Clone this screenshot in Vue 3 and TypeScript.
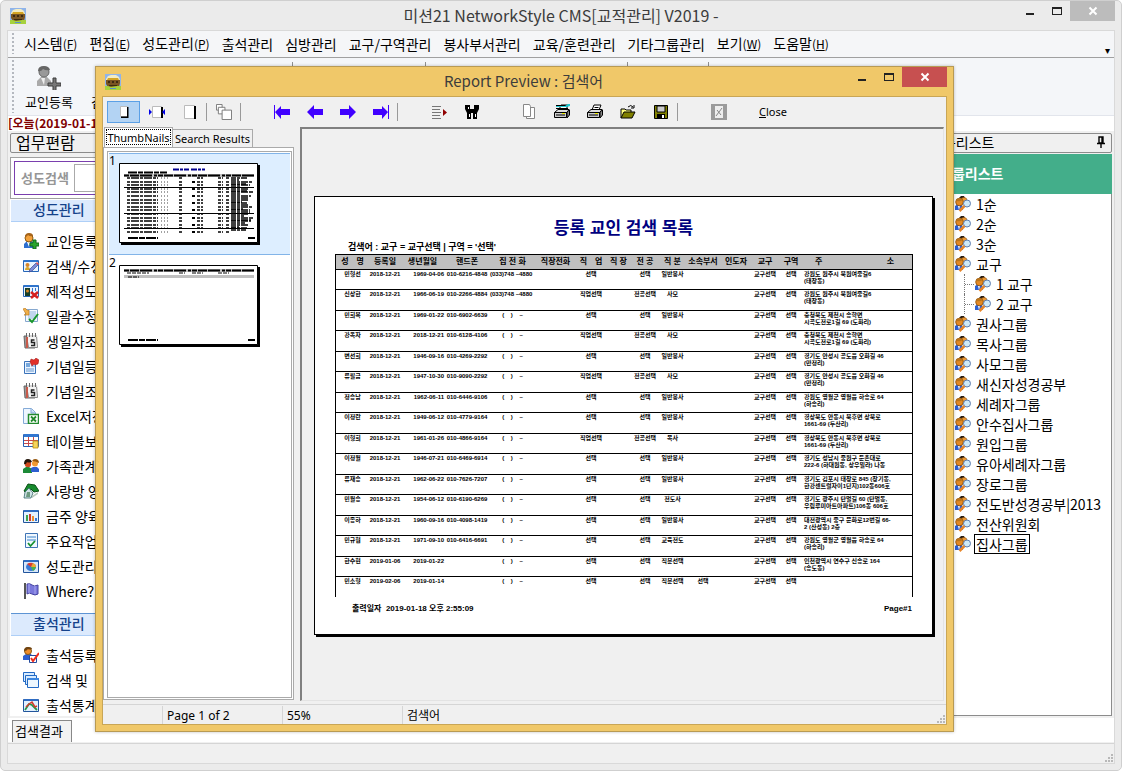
<script setup lang="ts">
import { ref } from 'vue'

interface MenuEntry { label: string; key?: string }
interface Entry { icon: string; label: string }
interface GroupNode { label: string; child?: boolean; selected?: boolean }
interface Member {
  name: string; reg: string; birth: string; phone: string; home: string
  job: string; major: string; duty: string; dept: string; area: string; zone: string; address: string
}

const menu: MenuEntry[] = [
  { label: '시스템', key: 'F' }, { label: '편집', key: 'E' }, { label: '성도관리', key: 'P' },
  { label: '출석관리' }, { label: '심방관리' }, { label: '교구/구역관리' }, { label: '봉사부서관리' },
  { label: '교육/훈련관리' }, { label: '기타그룹관리' }, { label: '보기', key: 'W' }, { label: '도움말', key: 'H' },
]

const memberTasks: Entry[] = [
  { icon: 'user-add', label: '교인등록' }, { icon: 'card-edit', label: '검색/수정' },
  { icon: 'card-del', label: '제적성도' }, { icon: 'batch', label: '일괄수정' },
  { icon: 'calendar', label: '생일자조' }, { icon: 'note', label: '기념일등' },
  { icon: 'calendar', label: '기념일조' }, { icon: 'excel', label: 'Excel저장' },
  { icon: 'table', label: '테이블보' }, { icon: 'family', label: '가족관계' },
  { icon: 'house', label: '사랑방 양' }, { icon: 'bars', label: '금주 양육' },
  { icon: 'todo', label: '주요작업' }, { icon: 'pie', label: '성도관리' },
  { icon: 'flag', label: 'Where?' },
]
const attendTasks: Entry[] = [
  { icon: 'user-check', label: '출석등록' }, { icon: 'windows', label: '검색 및' }, { icon: 'graph', label: '출석통계' },
]

const groups: GroupNode[] = [
  { label: '1순' }, { label: '2순' }, { label: '3순' }, { label: '교구' },
  { label: '1 교구', child: true }, { label: '2 교구', child: true },
  { label: '권사그룹' }, { label: '목사그룹' }, { label: '사모그룹' }, { label: '새신자성경공부' },
  { label: '세례자그룹' }, { label: '안수집사그룹' }, { label: '원입그룹' }, { label: '유아세례자그룹' },
  { label: '장로그룹' }, { label: '전도반성경공부|2013' }, { label: '전산위원회' }, { label: '집사그룹', selected: true },
]

const columns = ['성　명', '등록일', '생년월일', '핸드폰', '집 전 화', '직장전화', '직　업', '직 장', '전 공', '직 분', '소속부서', '인도자', '교구', '구역']

const none = '(    )    –'
function member(name: string, birth: string, phone: string, duty: string, address: string, extra: Partial<Member> = {}): Member {
  return { name, birth, phone, duty, address, reg: '2018-12-21', home: none, job: '선택', major: '선택', dept: '', area: '교구선택', zone: '선택', ...extra }
}
const wide = { job: '직업선택', major: '전공선택' }
const tel = '(033)748 –4880'
const members: Member[] = [
  member('민형선', '1969-04-06', '010-6216-4848', '일반봉사', '강원도 원주시 북원여중길6\n(태장동)', { home: tel }),
  member('신상한', '1966-06-19', '010-2266-4884', '사모', '강원도 원주시 북원여중길6\n(태장동)', { ...wide, home: tel }),
  member('민희복', '1969-01-22', '010-6902-6639', '일반봉사', '충청북도 제천시 송학면\n시곡도전로1길 69 (도화리)'),
  member('강옥자', '2018-12-21', '010-6128-4106', '사모', '충청북도 제천시 송학면\n시곡도전로1길 69 (도화리)', wide),
  member('변선희', '1946-09-16', '010-4269-2292', '일반봉사', '경기도 안성시 공도읍 오화길 46\n(만정리)'),
  member('류필금', '1947-10-30', '010-9090-2292', '사모', '경기도 안성시 공도읍 오화길 46\n(만정리)', wide),
  member('정승남', '1962-06-11', '010-6446-9106', '일반봉사', '강원도 영월군 영월읍 하송로 64\n(하송리)'),
  member('이정란', '1949-06-12', '010-4779-9164', '일반봉사', '경상북도 안동시 북후면 상북로\n1661-69 (두산리)'),
  member('이형희', '1961-01-26', '010-4866-9164', '목사', '경상북도 안동시 북후면 상북로\n1661-69 (두산리)', wide),
  member('이정월', '1946-07-21', '010-6469-6914', '일반봉사', '경기도 성남시 중원구 둔촌대로\n222-6 (하대원동, 상우빌라) 나동'),
  member('류재승', '1962-06-22', '010-7626-7207', '일반봉사', '경기도 김포시 태장로 845 (장기동,\n한강센트럴자이1단지)102동606호'),
  member('민월승', '1954-06-12', '010-6190-6269', '전도사', '경기도 광주시 탄벌길 60 (탄벌동,\n우림루미아트아파트)106동 606호'),
  member('이종하', '1960-09-16', '010-4098-1419', '일반봉사', '대전광역시 중구 문화로12번길 66-\n2 (산성동) 2층'),
  member('민규협', '1971-09-10', '010-6416-6691', '교육전도', '강원도 영월군 영월읍 하송로 64\n(하송리)'),
  member('한수현', '2019-01-22', '', '직분선택', '인천광역시 연수구 신송로 164\n(송도동)', { reg: '2019-01-06' }),
  member('민소형', '2019-01-14', '', '직분선택', '', { reg: '2019-02-06', dept: '선택' }),
]

const tools = ['fit', 'fit-width', 'full', '|', 'tile', '|', '', 'first', 'prev', 'next', 'last', '|', '', 'outline', 'find', '', 'copy', 'print-setup', 'print', 'open', 'save', '|', '', 'stop']
const toolNames: Record<string, string> = {
  fit: 'Whole page', 'fit-width': 'Page width', full: 'Full size', tile: 'Tile pages', first: 'First page', prev: 'Previous page',
  next: 'Next page', last: 'Last page', outline: 'Outline', find: 'Find', copy: 'Copy', 'print-setup': 'Print setup',
  print: 'Print', open: 'Open', save: 'Save', stop: 'Stop',
}
const thumbRows = Array.from({ length: 16 }, (_, i) => 15 + Math.round(i * 3.6))
const keyword = ref('')
</script>

<template>
  <svg class="defs" aria-hidden="true">
    <defs>
      <symbol id="ark" viewBox="0 0 16 16">
        <rect width="16" height="16" fill="#8fb4ea" /><path d="M1 5 3 2l3-1h5l3 2 1 3v2H1z" fill="#f3ecc4" /><path d="M3 4h10l1 2H2z" fill="#d5a524" />
        <path d="M1 6h14v3l-1 4H3L1 10z" fill="#7a5522" /><path d="M3 7h2v2H3zm4 0h2v2H7zm4 0h2v2h-2zM4 11h8v1H4z" fill="#3d2b10" />
        <path d="M0 12h3l3 1 6-1h4v4H0z" fill="#a6d13d" /><path d="M5 14h6v1H5z" fill="#5b92c9" />
      </symbol>
      <symbol id="user-add" viewBox="0 0 16 16">
        <path d="M1 15V11l3-3h5l2 3v4z" fill="#2d6fd0" /><path d="M4 9h3l-1 5z" fill="#fff" /><circle cx="6" cy="5" r="4" fill="#f3a13a" stroke="#8b5a13" />
        <path d="M2 4q0-4 4-4 4 0 4 3-3 1-5-1-1 2-3 2z" fill="#a5641a" /><path d="M10 7h3v3h3v3h-3v3h-3v-3H7v-3h3z" fill="#28a42b" stroke="#12691a" />
      </symbol>
      <symbol id="user-gray" viewBox="0 0 24 24">
        <path d="M0 20v-5l4-4h6l4 4v5z" fill="#aaa" /><path d="M4 12h4l-1 7z" fill="#eee" /><circle cx="7" cy="6" r="5" fill="#999" stroke="#666" />
        <path d="M1 5q0-5 6-5 5 0 6 4-4 1-7-1-2 3-5 2z" fill="#666" /><path d="M16 12h3v5h5v3h-5v5h-3v-5h-5v-3h5z" fill="#777" stroke="#3c3c3c" />
      </symbol>
      <symbol id="user-check" viewBox="0 0 16 16">
        <path d="M0 13V9l3-2h5l2 3v3z" fill="#2d5fd0" /><circle cx="5" cy="4" r="3.500" fill="#f08e2b" stroke="#8b5a13" />
        <path d="M1 4q0-4 4-4 4 0 4 2-3 1-4 0-1 2-4 2z" fill="#6e4312" /><path d="M6.500 8.500h7v7h-7z" fill="#fff" stroke="#244a9c" /><path d="m8 11 2 3 6-8" fill="none" stroke="#ee2b1c" stroke-width="2" />
      </symbol>
      <symbol id="card-edit" viewBox="0 0 16 16">
        <path d="M.5 2.500h15v11H.5z" fill="#eaf4ff" stroke="#2666b8" /><path d="M1 2h14v2H1z" fill="#2f74cc" /><circle cx="4.500" cy="7" r="2" fill="#d6862a" /><path d="M2 12q0-3 2.500-3T7 12z" fill="#d8a72c" />
        <path d="m6 14 1-3 6-6 2 2-6 6z" fill="#7a8bd8" stroke="#3d478c" stroke-width=".7" /><path d="m13 5 1-1 2 2-1 1z" fill="#e55" />
      </symbol>
      <symbol id="card-del" viewBox="0 0 16 16">
        <path d="M.5 2.500h15v11H.5z" fill="#eaf4ff" stroke="#2666b8" /><path d="M1 2h14v2H1z" fill="#2f74cc" /><path d="M2 5h5v8H2z" fill="#173f2a" /><circle cx="4.500" cy="8" r="1.500" fill="#d6862a" />
        <path d="M9 5h1v5H9zm3 0h1v3h-1z" fill="#2f74cc" /><path d="m8 9 7 6m0-6-7 6" stroke="#d61f1f" stroke-width="2.500" />
      </symbol>
      <symbol id="batch" viewBox="0 0 16 16">
        <path d="M2.500 1.500h12v12h-12z" fill="#f3f8ff" stroke="#86a8cf" /><path d="M5 4h8M5 6h8M5 8h8M5 10h8" stroke="#8eb3dd" /><path d="m0 1 2-1 3 3 1-1v5H1l2-1z" fill="#f0b04a" stroke="#b87415" stroke-width=".6" />
        <path d="m6 11 3 3 6-8" fill="none" stroke="#19962b" stroke-width="2" />
      </symbol>
      <symbol id="calendar" viewBox="0 0 16 16">
        <path d="M1 3h9l2 12H2z" fill="#9a9a9a" stroke="#666" /><path d="M3.500 2.500h10l1 12h-9z" fill="#f4f4f4" stroke="#888" /><path d="M3 2h2v13H3z" fill="#c85a4a" /><path d="M4 2h10v2H4z" fill="#d8d8d8" />
        <path d="M3.500 0v4m3-4v4m3-4v4m3-4v4" stroke="#666" /><path d="M11.500 7H8.500v2.500h3v3H8" fill="none" stroke="#222" stroke-width="1.500" />
      </symbol>
      <symbol id="note" viewBox="0 0 16 16">
        <path d="M1.500 3.500h11v12h-11z" fill="#ecf4ff" stroke="#3b73b9" /><path d="M3 5h4v4H3z" fill="#76a8dd" /><path d="M8 8h4M3 11h8M3 13h8" stroke="#6395cd" />
        <path d="M7 4 8 1l3 1 2-2 3 2-1 4-3 1-1-1-2 2z" fill="#e0302a" stroke="#981414" stroke-width=".5" />
      </symbol>
      <symbol id="excel" viewBox="0 0 16 16">
        <path d="M.5.500h8l4 4v11H.5z" fill="#edf5ff" stroke="#85abd7" /><path d="M8 1v4h4" fill="#c5dcf6" stroke="#85abd7" /><path d="M5.500 6.500h10v9h-10z" fill="#fff" stroke="#238a2d" stroke-width="1.500" />
        <path d="m8 8.500 5 5m0-5-5 5" stroke="#238a2d" stroke-width="1.800" />
      </symbol>
      <symbol id="table" viewBox="0 0 16 16">
        <path d="M.5 1.500h15v12H.5z" fill="#fff" stroke="#2761b5" /><path d="M1 1h14v3H1z" fill="#3277d0" /><path d="M1 7.500h14M1 10.500h14M5.500 4v9M10.500 4v9" stroke="#c74a4a" /><path d="M10 8h5v7h-5z" fill="#f6d45a" stroke="#b98e10" stroke-width=".8" />
      </symbol>
      <symbol id="family" viewBox="0 0 16 16">
        <path d="M0 15v-4l3-2h3l3 2v4z" fill="#1c8a37" /><path d="M8 14v-4l2-1h4l2 2v3z" fill="#2d5fd0" /><circle cx="5" cy="6" r="3.200" fill="#d34a1e" /><circle cx="12" cy="5.500" r="3" fill="#f09a32" />
        <path d="M1 6q0-5 4-5 3 0 4 3-4 1-5 0-1 3-3 2z" fill="#22150b" /><path d="M9 3q1-2 3-2 4 0 4 4-4-2-7-2z" fill="#98590f" />
      </symbol>
      <symbol id="house" viewBox="0 0 16 16">
        <path d="M1 8 5 1l7 1 4 6-5 1-3-3-3 5z" fill="#168a2c" stroke="#0b4f17" /><path d="m2 9 4-4 4 5-2 5H1z" fill="#cfe3e6" stroke="#366" stroke-width=".8" /><path d="M4 9h3v5H3z" fill="#6d9a80" /><path d="m9 13 6-4v2l-6 4z" fill="#b5c7bb" />
      </symbol>
      <symbol id="bars" viewBox="0 0 16 16">
        <path d="M.5 2.500h15v12H.5z" fill="#e2f1ff" stroke="#22559c" /><path d="M1 2h14v2H1z" fill="#2f6cc2" /><path d="M3 7h2v6H3z" fill="#3fa24a" /><path d="M6 6h2v7H6z" fill="#d23a2b" /><path d="M9 8h2v5H9z" fill="#ee8e2d" /><path d="M12 10h2v3h-2z" fill="#3277d0" />
      </symbol>
      <symbol id="graph" viewBox="0 0 16 16">
        <path d="M.5 2.500h15v12H.5z" fill="#e2f1ff" stroke="#22559c" /><path d="M1 2h14v2H1z" fill="#2f6cc2" /><path d="m2 13 4-6 3 1 5 5" fill="none" stroke="#25984a" stroke-width="1.800" /><path d="m3 10 3-3 3-2 3 5 2-1" fill="none" stroke="#d23a2b" stroke-width="1.500" />
      </symbol>
      <symbol id="todo" viewBox="0 0 16 16">
        <path d="M2.500.500h12v14h-12z" fill="#f0f8ff" stroke="#3f74b5" /><path d="M4 4h9M4 7h9" stroke="#3c83ca" /><path d="m5 10 2.500 3L12 8" fill="none" stroke="#169030" stroke-width="1.800" />
      </symbol>
      <symbol id="pie" viewBox="0 0 16 16">
        <path d="M.5 2.500h15v12H.5z" fill="#d7e7fa" stroke="#22559c" /><path d="M1 2h14v2H1z" fill="#2f6cc2" /><ellipse cx="8" cy="9" rx="5" ry="4" fill="#3a7ad5" /><path d="M8 9 4 6q3-2 6-1z" fill="#e03a2b" /><path d="m8 9 2-4q3 1 3 4z" fill="#f0a52c" /><path d="M8 9h5q-1 3-3 4z" fill="#4bb148" />
      </symbol>
      <symbol id="flag" viewBox="0 0 16 16">
        <path d="M1 0h2v16H1z" fill="#555" /><path d="M4 1q3-1 5 1t6 0v9q-3 2-6 0t-5 0z" fill="#7a78dc" stroke="#4442a0" /><path d="M6 1v9m6-7v8" stroke="#a9a8ef" />
      </symbol>
      <symbol id="windows" viewBox="0 0 16 16">
        <path d="M.5.500h11v9H.5z" fill="#d8ecff" stroke="#2269c4" /><path d="M2.500 3.500h11v9h-11z" fill="#d8ecff" stroke="#2269c4" /><path d="M4.500 6.500h11v9h-11z" fill="#edf7ff" stroke="#2269c4" /><path d="M5 6h11v2H5z" fill="#3b86e0" />
      </symbol>
      <symbol id="people" viewBox="0 0 16 16">
        <path d="M4 2 6 0h3l1 2v3H4z" fill="#2a1c10" /><circle cx="9" cy="4.500" r="3" fill="#ef9a35" stroke="#8a4f0b" stroke-width=".6" /><path d="M0 14V10l3-2h4l1 6z" fill="#2d5fd0" /><path d="M3 10h2l-1 4z" fill="#fff" />
        <circle cx="4.500" cy="6" r="3.800" fill="#e58a24" stroke="#8a4f0b" stroke-width=".8" /><path d="M1 5q1-3 4-3l3 2q-3 2-7 1z" fill="#b9741a" />
        <circle cx="12" cy="7.500" r="3.500" fill="#cfeaf8" stroke="#5f7fb0" /><path d="m9.500 10-5 5" stroke="#e8872a" stroke-width="2.500" />
      </symbol>
      <symbol id="fit" viewBox="0 0 16 16"><path d="M4.500 2.500h7v10h-7z" fill="#fff" stroke="#bbb" /><path d="M11 3h1.500v11H5v-1.500h6z" fill="#000" /></symbol>
      <symbol id="fit-width" viewBox="0 0 16 16"><path d="M3.500 2.500h9v11h-9z" fill="#fff" stroke="#bbb" /><path d="M12 3h2v11h-2z" fill="#000" /><path d="M0 5v6l3-3zM16 5v6l-3-3z" fill="#0000e8" /></symbol>
      <symbol id="full" viewBox="0 0 16 16"><path d="M2.500 1.500h10v13h-10z" fill="#fff" stroke="#bbb" /><path d="M12 2h2v13h-2z" fill="#000" /></symbol>
      <symbol id="tile" viewBox="0 0 17 17"><g fill="#fff" stroke="#777"><path d="M.5.500h6v6h-6z" /><path d="M2.500 3.500h7v7h-7z" /><path d="M6.500 6.500h10v10h-10z" /></g></symbol>
      <symbol id="prev" viewBox="0 0 16 16"><path d="m0 8 7-7v4h9v6H7v4z" fill="#4000ff" /></symbol>
      <symbol id="next" viewBox="0 0 16 16"><path d="m16 8-7-7v4H0v6h9v4z" fill="#4000ff" /></symbol>
      <symbol id="first" viewBox="0 0 16 16"><path d="M0 1h1v14H0zM1 8l6-6v3h9v6H7v4z" fill="#4000ff" /></symbol>
      <symbol id="last" viewBox="0 0 16 16"><path d="M15 1h1v14h-1zM15 8 9 2v3H0v6h9v4z" fill="#4000ff" /></symbol>
      <symbol id="outline" viewBox="0 0 16 16"><path d="M1 2.500h9M1 5.500h8M1 8.500h9M1 11.500h8M1 14.500h9" stroke="#777" /><path d="m12 5 4 3.500-4 3.500z" fill="#900000" /></symbol>
      <symbol id="find" viewBox="0 0 16 16"><path d="M1 1h5v4h4V1h5v4l-2 4v6H9V9H7v6H3V9L1 5z" fill="#000" /><path d="M5 10h1v3H5zm6 0h1v3h-1zM4 3h1v2H4z" fill="#fff" /></symbol>
      <symbol id="copy" viewBox="0 0 16 16"><g fill="#fff" stroke="#888"><path d="M5.500 3.500h8v11h-8z" /><path d="M2.500.500h6l1 2v10h-7z" /></g></symbol>
      <symbol id="print" viewBox="0 0 16 16"><path d="m5 6 2-5h7l-2 5z" fill="#fff" stroke="#000" /><path d="M7.500 3.500h4" stroke="#000" /><path d="M.5 8.500 4 5.500h11l-2 3z" fill="#ddd" stroke="#000" /><path d="M.5 8.500h12v5H.5z" fill="#ccc" stroke="#000" /><path d="m13 8 2.500-2v5L13 14z" fill="#888" stroke="#000" /><path d="M2 11h9" stroke="#000" /><path d="M8 9h3v1H8z" fill="#ee0" /></symbol>
      <symbol id="print-setup" viewBox="0 0 16 16"><path d="m5 6 2-5h7l-2 5z" fill="#fff" stroke="#000" /><path d="M.5 8.500 4 5.500h11l-2 3z" fill="#ddd" stroke="#000" /><path d="M.5 8.500h12v5H.5z" fill="#ccc" stroke="#000" /><path d="m13 8 2.500-2v5L13 14z" fill="#888" stroke="#000" /><path d="M2 11h9M2 1.500h12M2 4.500h12" stroke="#000" /><path d="M2 2h9l3-2h2v2l-3 1H2z" fill="#20c8d0" /><path d="M8 9h3v1H8z" fill="#ee0" /></symbol>
      <symbol id="open" viewBox="0 0 16 16"><path d="M1 14V5h4l1 1h5v3" fill="#ffff80" stroke="#000" /><path d="m1 14 3-6h11l-3 6z" fill="#808000" stroke="#000" /><path d="M8 3q3-3 5 0m1-2v3h-3" fill="none" stroke="#000" /></symbol>
      <symbol id="save" viewBox="0 0 16 16"><path d="M1.500 1.500h13v13h-13z" fill="#808000" stroke="#000" /><path d="M4 2h8v6H4z" fill="#ccc" stroke="#000" /><path d="M4 10h8v5H4z" fill="#000" /><path d="M9 11h2v3H9z" fill="#fff" /></symbol>
      <symbol id="stop" viewBox="0 0 16 16"><path d="M0 0h16v16H0z" fill="#9b9b9b" /><path d="M4 2h8v12H4z" fill="#eee" /><path d="m5 12 6-8M6 6l4 5" stroke="#888" /></symbol>
      <symbol id="cross" viewBox="0 0 10 10"><path d="m1.500 1.500 7 7m0-7-7 7" stroke="#fff" stroke-width="2" /></symbol>
      <symbol id="grip" viewBox="0 0 10 10"><path d="M7 1h2v2H7zM4 4h2v2H4zm3 0h2v2H7zM1 7h2v2H1zm3 0h2v2H4zm3 0h2v2H7z" fill="#b8b8b8" /></symbol>
    </defs>
  </svg>

  <div class="window">
    <header class="titlebar">
      <svg class="i16"><use href="#ark" /></svg>
      <h1>미션21 NetworkStyle CMS[교적관리] V2019 -</h1>
      <div class="winbtns">
        <button aria-label="Minimize"><span class="min" /></button>
        <button aria-label="Maximize"><span class="max" /></button>
        <button class="close" aria-label="Close window"><svg><use href="#cross" /></svg></button>
      </div>
    </header>

    <div class="client">
      <nav class="menubar">
        <span class="handle" />
        <button v-for="m in menu" :key="m.label">{{ m.label }}<span v-if="m.key" class="key">(<u>{{ m.key }}</u>)</span></button>
        <span class="overflow">▾</span>
      </nav>
      <div class="toolbar">
        <span class="handle" />
        <div class="tg g1">
          <button><svg class="i24"><use href="#user-gray" /></svg>교인등록</button>
          <button><span class="i24" />검색</button>
        </div>
        <div class="tg g2" /><div class="tg g3" /><div class="tg g4" />
      </div>
      <p class="today">[오늘(2019-01-18)</p>

      <main class="work">
        <aside class="left">
          <h2 class="caption">업무편람</h2>
          <div class="searchframe">
            <label class="search">성도검색<input v-model="keyword" type="text"></label>
          </div>
          <section class="tasks">
            <h3>성도관리</h3>
            <ul><li v-for="(t, i) in memberTasks" :key="i"><button><svg class="i16"><use :href="'#' + t.icon" /></svg>{{ t.label }}</button></li></ul>
            <h3 class="second">출석관리</h3>
            <ul><li v-for="t in attendTasks" :key="t.label"><button><svg class="i16"><use :href="'#' + t.icon" /></svg>{{ t.label }}</button></li></ul>
          </section>
        </aside>
        <aside class="right">
          <h2 class="caption">그룹리스트
            <svg class="pin" viewBox="0 0 8 12"><path d="M2 1h4v6H2zM5 1v6M0 7.500h8M4 8v4" fill="none" stroke="#000" stroke-width="1.400" /></svg>
          </h2>
          <h3 class="green">그룹리스트</h3>
          <ul class="tree">
            <li v-for="g in groups" :key="g.label" :class="{ child: g.child }">
              <svg class="i16"><use href="#people" /></svg><button :class="{ sel: g.selected }">{{ g.label }}</button>
            </li>
          </ul>
        </aside>
      </main>
      <div class="bottomtabs"><button>검색결과</button></div>
      <footer class="status"><svg class="grip"><use href="#grip" /></svg></footer>
    </div>
  </div>

  <div class="dialog" role="dialog" aria-label="Report Preview">
    <header class="titlebar">
      <svg class="i16"><use href="#ark" /></svg>
      <h1>Report Preview : 검색어</h1>
      <div class="winbtns">
        <button aria-label="Minimize preview"><span class="min" /></button>
        <button aria-label="Maximize preview"><span class="max" /></button>
        <button class="close" aria-label="Close preview window"><svg><use href="#cross" /></svg></button>
      </div>
    </header>
    <div class="inner">
      <div class="ptools">
        <template v-for="(t, i) in tools" :key="i">
          <span v-if="t === '|'" class="sep" />
          <span v-else-if="t === ''" class="gap" />
          <button v-else :class="{ on: t === 'fit' }" :aria-label="toolNames[t]"><svg class="i16"><use :href="'#' + t" /></svg></button>
        </template>
        <button class="text"><u>C</u>lose</button>
      </div>
      <div class="split">
        <div class="side">
          <div class="tabs"><button class="active">ThumbNails</button><button>Search Results</button></div>
          <div class="sidebody">
            <div class="thumbs">
              <div class="thumb on">
                <span>1</span>
                <svg viewBox="0 0 141 82">
                  <path d="M2 2h139v80H2z" fill="#000" /><path d="M.5.500h138v79H.5z" fill="#fff" stroke="#000" />
                  <path d="M54 6.500h32" stroke="#000090" stroke-width="2" stroke-dasharray="6 1 3 1 5 2" />
                  <path d="M5 12.500h130" stroke="#c0c0c0" stroke-width="3" /><path d="M9 9.500h39" stroke="#000" stroke-width="2" stroke-dasharray="9 1 5 1" />
                  <path d="M5 12.500h130" stroke="#000" stroke-width="2" stroke-dasharray="5 1 9 1 12 2 3 1" />
                  <g v-for="(y, i) in thumbRows" :key="y" stroke="#000">
                    <path :d="`M8 ${y}h31M60 ${y}h4M78 ${y}h6M99 ${y}h5M107 ${y}h3`" stroke-width="1.500" stroke-dasharray="3 1 8 1" />
                    <path :d="`M42 ${y}h8`" stroke="#444" stroke-dasharray="1 2" />
                    <path v-if="i % 2" :d="`M73 ${y}h3`" stroke-width="2" />
                    <path v-if="i < 15" :d="`M112 ${y}h${16 + (i * 5) % 7}M112 ${y + 2}h${8 + (i * 7) % 13}`" stroke-width="1.500" stroke-dasharray="5 1 3 1 7 1" />
                  </g>
                  <path d="M5 24.500h130M5 50.500h130M5 65.500h130" stroke="#000" />
                  <path d="M9 75h30M129 75h7" stroke="#000" stroke-width="2" stroke-dasharray="10 1 6 1" />
                </svg>
              </div>
              <div class="thumb">
                <span>2</span>
                <svg viewBox="0 0 141 82">
                  <path d="M2 2h139v80H2z" fill="#000" /><path d="M.5.500h138v79H.5z" fill="#fff" stroke="#000" />
                  <path d="M5 5.500h130M5 11.500h130" stroke="#c0c0c0" stroke-width="3" />
                  <path d="M5 5.500h130" stroke="#000" stroke-width="2" stroke-dasharray="5 1 9 1 12 2 3 1" />
                  <path d="M8 8h22M60 8h6M73 8h11M99 8h11M9 12h11" stroke="#000" stroke-dasharray="4 1" />
                  <path d="M9 75h30M129 75h7" stroke="#000" stroke-width="2" stroke-dasharray="10 1 6 1" />
                </svg>
              </div>
            </div>
          </div>
        </div>
        <div class="viewer">
          <article class="paper">
            <h2>등록 교인 검색 목록</h2>
            <p class="cond">검색어 : 교구 = 교구선택 | 구역 = '선택'</p>
            <table>
              <colgroup><col v-for="(c, i) in columns" :key="c" :class="'c' + i"><col></colgroup>
              <thead><tr><th v-for="c in columns" :key="c">{{ c }}</th><th><span class="addr"><span>주</span><span>소</span></span></th></tr></thead>
              <tbody>
                <tr v-for="m in members" :key="m.name">
                  <td>{{ m.name }}</td><td>{{ m.reg }}</td><td class="r">{{ m.birth }}</td><td>{{ m.phone }}</td>
                  <td :class="{ l: m.home === tel }">{{ m.home }}</td><td /><td>{{ m.job }}</td><td /><td>{{ m.major }}</td><td>{{ m.duty }}</td>
                  <td>{{ m.dept }}</td><td /><td>{{ m.area }}</td><td>{{ m.zone }}</td><td class="l">{{ m.address }}</td>
                </tr>
              </tbody>
            </table>
            <footer><span>출력일자&nbsp; 2019-01-18 오후 2:55:09</span><span>Page#1</span></footer>
          </article>
        </div>
      </div>
      <footer class="pstatus">
        <span class="s0" /><span class="s1">Page 1 of 2</span><span class="s1">55%</span><span class="s2">검색어</span>
        <svg class="grip"><use href="#grip" /></svg>
      </footer>
    </div>
  </div>
</template>

<style>
body { margin: 0; background: #fff; }
</style>

<style scoped>
* { box-sizing: border-box; }
h1, h2, h3, p, ul { margin: 0; padding: 0; font-size: 14px; font-weight: 400; list-style: none; }
button { border: 0; padding: 0; margin: 0; background: none; font: inherit; color: inherit; white-space: nowrap; }
svg { display: block; flex: none; }
.defs { position: absolute; width: 0; height: 0; }
.i16 { width: 16px; height: 16px; }
.i24 { display: block; width: 24px; height: 24px; }
.window, .dialog { font-family: "Noto Sans CJK KR", sans-serif; font-size: 14px; line-height: 20px; color: #000; }
.window { height: 100vh; display: flex; flex-direction: column; background: #ebebeb; border: 1px solid #cfcfcf; border-radius: 5px; padding: 0 6px 6px; overflow: hidden; }
.titlebar { height: 29px; flex: none; display: flex; align-items: center; position: relative; }
.window .titlebar .i16 { margin-left: 3px; }
.titlebar h1 { flex: 1; text-align: center; font-size: 16px; color: #3c3c3c; line-height: 24px; padding-bottom: 2px; }
.window .titlebar h1 { margin-right: 19px; }
.winbtns { position: absolute; top: 0; right: 0; display: flex; }
.winbtns button { width: 27px; height: 20px; display: flex; justify-content: center; align-items: center; }
.winbtns .close { width: 45px; background: #bcbcbc; }
.winbtns .close svg { width: 10px; height: 10px; }
.min { width: 8px; height: 2px; background: #222; margin-top: 6px; }
.max { width: 10px; height: 8px; border: 1px solid #222; border-top-width: 2px; }
.client { flex: 1; min-height: 0; display: flex; flex-direction: column; border: 1px solid #d9d9d9; background: #f0f0f0; }
.menubar { flex: none; height: 27px; display: flex; align-items: center; gap: 12px; padding: 0 4px 1px; background: #f5f6f8; border-bottom: 1px solid #a0a0a0; }
.menubar .handle { margin-right: -2px; }
.key { font-size: 12px; }
.overflow { margin-left: auto; font-size: 10px; padding-top: 12px; }
.handle { width: 2px; align-self: stretch; margin-top: 2px; margin-bottom: 2px; background: repeating-linear-gradient(#b4b8bf 0 2px, transparent 2px 4px); }
.toolbar { flex: none; height: 58px; display: flex; padding: 0 4px; background: #f4f6f9; border-bottom: 1px solid #e2e5ec; }
.tg { border-right: 1px solid #909090; margin: 4px 0; flex: none; display: flex; gap: 18px; align-items: flex-start; }
.g1 { width: 279px; padding-left: 11px; }
.g2 { width: 133px; } .g3 { width: 202px; } .g4 { width: 81px; }
.tg button { display: flex; flex-direction: column; align-items: center; gap: 2px; font-size: 13px; padding-top: 4px; }
.today { flex: none; height: 15px; line-height: 14px; background: #fff; color: #800000; font-size: 12px; font-weight: 700; }
.work { flex: 1; min-height: 0; display: flex; justify-content: space-between; padding: 2px 2px 0; }
.left, .right { width: 188px; display: flex; flex-direction: column; min-height: 0; }
.caption { flex: none; height: 20px; border: 1px solid #8c8c8c; border-radius: 2px; line-height: 18px; display: flex; align-items: center; }
.left .caption { font-size: 16px; padding-left: 5px; line-height: 16px; padding-bottom: 2px; }
.right .caption { padding: 0 6px 2px 5px; justify-content: space-between; }
.pin { width: 8px; height: 12px; }
.searchframe { flex: none; margin-top: 4px; border: 1px solid #a0a0a0; background: #fff; padding: 3px; }
.search { height: 34px; display: flex; align-items: center; gap: 5px; border: 1px solid #7a3fae; padding-left: 6px; font-size: 13px; font-weight: 700; color: #969696; }
.search input { width: 100px; height: 28px; border: 1px solid #aaa; background: #fff; }
.tasks { flex: 1; min-height: 0; background: #fff; overflow: hidden; padding-top: 1px; }
.tasks h3 { height: 22px; line-height: 18px; margin-left: 1px; padding-left: 22px; background: #dceafd; border-bottom: 1px solid #aecff7; color: #15428b; font-weight: 500; }
.tasks h3.second { margin-top: 10px; height: 23px; line-height: 18px; border-top: 1px solid #5d94d4; }
.tasks ul { padding-top: 6px; }
.tasks button { display: flex; align-items: center; gap: 7px; height: 25px; line-height: 22px; padding-left: 13px; }
.green { flex: none; height: 40px; margin-top: 1px; line-height: 38px; padding-left: 15px; background: #43ae8a; color: #fff; font-weight: 700; }
.tree { flex: 1; min-height: 0; background: #fff; border: 1px solid #8c8c8c; border-top: 0; overflow: hidden; padding-left: 30px; }
.tree li { display: flex; align-items: center; gap: 3px; height: 20px; }
.tree li button { border: 1px solid transparent; height: 20px; line-height: 16px; padding: 0 1px; }
.tree li button.sel { border-color: #000; }
.tree li.child { margin-left: 9px; }
.tree li.child::before { content: ""; width: 9px; height: 20px; margin-right: -2px; border-left: 1px dotted #777; background: repeating-linear-gradient(90deg, #777 0 1px, transparent 1px 2px) 0 10px / 100% 1px no-repeat; }
.bottomtabs { flex: none; height: 26px; background: #fff; border-top: 2px solid #f0f0f0; padding: 2px 4px 0; display: flex; }
.bottomtabs button { width: 60px; height: 22px; border: 1px solid #888; border-bottom: 0; background: #f2f2f2; font-size: 13px; line-height: 18px; text-align: left; padding: 0 0 2px 2px; }
.status { flex: none; height: 20px; border-top: 1px solid #d5d5d5; margin-top: 1px; display: flex; justify-content: flex-end; align-items: flex-end; }
.grip { width: 10px; height: 10px; }

.dialog { position: absolute; left: 95px; right: 168px; top: 66px; bottom: 39px; display: flex; flex-direction: column; background: #f0c869; border: 1px solid #b89a53; padding: 0 6px 6px; box-shadow: 0 0 3px rgba(0, 0, 0, .25); }
.dialog .titlebar .i16 { margin-left: 3px; }
.dialog .titlebar h1 { font-size: 15px; margin-right: 21px; }
.dialog .winbtns .close { background: #c75050; }
.inner { flex: 1; min-height: 0; display: flex; flex-direction: column; background: #f0f0f0; border: 1px solid #c9a656; font-family: "Noto Sans", "Noto Sans CJK KR", sans-serif; }
.ptools { flex: none; height: 30px; display: flex; align-items: center; padding-left: 4px; }
.ptools button { width: 33px; height: 22px; display: flex; justify-content: center; align-items: center; }
.ptools button.on { background: #b3d3f3; border: 1px solid #5ba0e6; }
.ptools button.text { width: auto; margin-left: 24px; font-size: 11px; display: block; line-height: 22px; }
.sep { width: 1px; height: 18px; background: #999; }
.gap { width: 24px; }
.split { flex: 1; min-height: 0; display: flex; gap: 6px; padding-right: 2px; }
.side { width: 191px; flex: none; display: flex; flex-direction: column; }
.tabs { height: 20px; flex: none; display: flex; align-items: flex-end; font-size: 11px; padding-left: 1px; }
.tabs button { width: 80px; height: 18px; line-height: 17px; border: 1px solid #aaa; border-bottom: 0; border-left: 0; }
.tabs .active { width: 69px; height: 20px; background: #fff; outline: 1px dotted #000; outline-offset: -3px; border-left: 1px solid #aaa; line-height: 17px; }
.sidebody { flex: 1; min-height: 0; background: #fff; border: 1px solid #aaa; padding: 3px 1px 1px 3px; margin-bottom: 1px; }
.thumbs { height: 100%; border: 1px solid #aaa; padding: 1px; }
.thumb { height: 102px; border-top: 1px solid transparent; border-bottom: 1px solid transparent; display: flex; font-size: 12px; line-height: 14px; }
.thumb.on { background: #ddeeff; border-color: #82b4e8; }
.thumb span { width: 10px; }
.thumb svg { width: 141px; height: 82px; margin-top: 9px; }
.viewer { flex: 1; min-width: 0; border: 2px solid #808080; border-right: 1px solid #e3e3e3; border-bottom: 1px solid #e3e3e3; padding: 67px 0 0 12px; overflow: hidden; }
.paper { width: 619px; height: 439px; background: #fff; border: 1px solid #000; box-shadow: 2px 2px 0 #000; padding: 20px 20px 0; font-family: "Liberation Sans", "Noto Sans CJK KR", sans-serif; }
.paper h2 { text-align: center; font-size: 17px; line-height: 24px; color: #000080; font-weight: 700; }
.cond { font-size: 9px; line-height: 10px; font-weight: 700; padding-left: 13px; margin: 1px 0 2px; }
table { width: 578px; table-layout: fixed; border-collapse: separate; border-spacing: 0; border: 1px solid #000; border-bottom: 0; }
.c0 { width: 33px; } .c1 { width: 32px; } .c2 { width: 43px; } .c3 { width: 46px; } .c4 { width: 45px; } .c5 { width: 41px; } .c6 { width: 30px; }
.c7 { width: 25px; } .c8 { width: 28px; } .c9 { width: 27px; } .c10 { width: 34px; } .c11 { width: 32px; } .c12 { width: 26px; } .c13 { width: 26px; }
th { height: 14px; padding: 0; background: #c0c0c0; font-size: 8px; line-height: 12px; font-weight: 700; white-space: nowrap; }
.addr { display: flex; justify-content: space-between; padding: 0 18px 0 11px; }
td { height: 20px; padding: 1px 0 0; border-top: 1px solid #000; font-size: 6px; line-height: 7px; font-weight: 700; text-align: center; vertical-align: top; white-space: pre; }
tr:nth-child(even) td { height: 21px; }
td.r { text-align: right; }
td.l { text-align: left; }
.paper footer { display: flex; justify-content: space-between; padding: 7px 0 0 17px; font-size: 8px; line-height: 10px; font-weight: 700; }
.pstatus { flex: none; height: 20px; margin-top: 3px; border-top: 1px solid #d5d5d5; display: flex; font-size: 12px; line-height: 19px; }
.pstatus span { border-right: 1px solid #d5d5d5; padding-left: 4px; margin-top: 1px; }
.s0 { width: 60px; } .s1 { width: 120px; } .pstatus .s2 { flex: 1; border-right: 0; }
.pstatus .grip { align-self: flex-end; }
</style>
